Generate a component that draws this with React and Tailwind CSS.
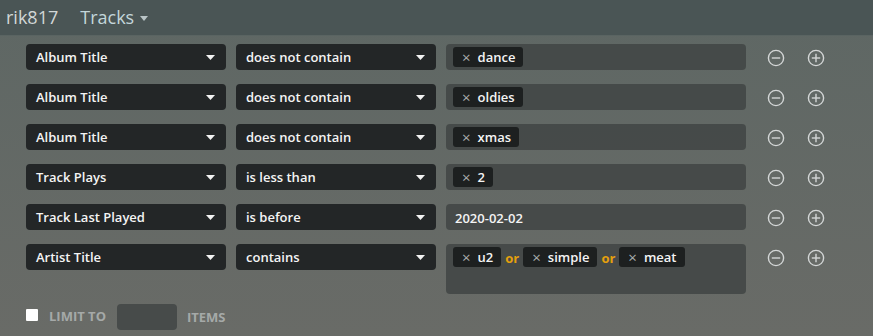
import React from "react";

const font = { fontFamily: '"Open Sans", "Noto Sans", sans-serif' };

function Caret() {
  return (
    <svg width="9" height="5" viewBox="0 0 9 5" className="shrink-0">
      <path d="M0 0 L9 0 L4.5 5 Z" fill="#f2f2f2" />
    </svg>
  );
}

function Select({ label }) {
  return (
    <div className="w-[200px] h-[26px] rounded-[4px] bg-[#232627] flex items-center justify-between pl-[10px] pr-[11px] text-[13px] font-semibold text-[#f4f4f4]">
      <span className="pt-[2px]">{label}</span>
      <Caret />
    </div>
  );
}

function Tag({ text }) {
  return (
    <div className="h-[20px] rounded-[3px] bg-[#1d2020] flex items-center pl-[9px] pr-[8px] gap-[7px]">
      <span className="text-[15px] text-[#a9adad] leading-none">×</span>
      <span className="text-[13px] font-semibold text-[#f4f4f4] leading-none pt-[1px]">{text}</span>
    </div>
  );
}

function CircleIcon({ plus }) {
  return (
    <svg width="18" height="18" viewBox="0 0 18 18">
      <circle cx="9" cy="9" r="7.6" fill="none" stroke="#d3d6d6" strokeWidth="1.4" />
      <line x1="4.8" y1="9" x2="13.2" y2="9" stroke="#d3d6d6" strokeWidth="1.4" />
      {plus && <line x1="9" y1="4.8" x2="9" y2="13.2" stroke="#d3d6d6" strokeWidth="1.4" />}
    </svg>
  );
}

function Row({ field, op, value, tags, tall }) {
  return (
    <div className="flex items-start gap-[10px]">
      <Select label={field} />
      <Select label={op} />
      <div
        className={`w-[300px] ${tall ? "h-[50px]" : "h-[26px]"} rounded-[4px] bg-[#434746]/90 flex items-start pt-[3px] pl-[7px] gap-[4px]`}
      >
        {value ? (
          <span className="text-[13px] font-semibold text-[#f4f4f4] pl-[2px] leading-[20px] pt-[1px]">{value}</span>
        ) : (
          tags.map((t, i) => (
            <React.Fragment key={t}>
              {i > 0 && <span className="text-[13px] font-bold text-[#e5a00d] leading-[20px] pt-[1px]">or</span>}
              <Tag text={t} />
            </React.Fragment>
          ))
        )}
      </div>
      <div className="flex items-center gap-[22px] h-[26px] pl-[11px] pt-[1px]">
        <CircleIcon />
        <CircleIcon plus />
      </div>
    </div>
  );
}

export default function App() {
  const rows = [
    { field: "Album Title", op: "does not contain", tags: ["dance"] },
    { field: "Album Title", op: "does not contain", tags: ["oldies"] },
    { field: "Album Title", op: "does not contain", tags: ["xmas"] },
    { field: "Track Plays", op: "is less than", tags: ["2"] },
    { field: "Track Last Played", op: "is before", value: "2020-02-02" },
    { field: "Artist Title", op: "contains", tags: ["u2", "simple", "meat"], tall: true },
  ];
  return (
    <div style={font} className="w-[873px] h-[336px] overflow-hidden bg-gradient-to-b from-[#5e6764] to-[#696b67]">
      <div className="h-[36px] bg-[#4a5555] flex items-center pl-[6px] border-b border-[#5a6462]">
        <span className="text-[18px] text-[#d2d7d7]">rik817</span>
        <span className="ml-[22px] text-[18px] text-[#c3d6da]">Tracks</span>
        <svg width="8" height="5" viewBox="0 0 8 5" className="ml-[6px] mt-[1px]">
          <path d="M0 0 L8 0 L4 5 Z" fill="#b9c4c6" />
        </svg>
      </div>
      <div className="pl-[26px] pt-[8px] flex flex-col gap-[14px]">
        {rows.map((r, i) => (
          <Row key={i} {...r} />
        ))}
      </div>
      <div className="flex items-center pl-[26px] mt-[10px] h-[26px]">
        <div className="w-[12px] h-[12px] bg-white rounded-[1px] -mt-[4px]" />
        <span className="ml-[11px] text-[13px] font-bold text-[#a5a9a8]">LIMIT TO</span>
        <div className="ml-[11px] w-[60px] h-[26px] rounded-[4px] bg-[#474b4a]" />
        <span className="ml-[10px] text-[13px] font-bold text-[#a5a9a8] pt-[2px]">ITEMS</span>
      </div>
    </div>
  );
}
